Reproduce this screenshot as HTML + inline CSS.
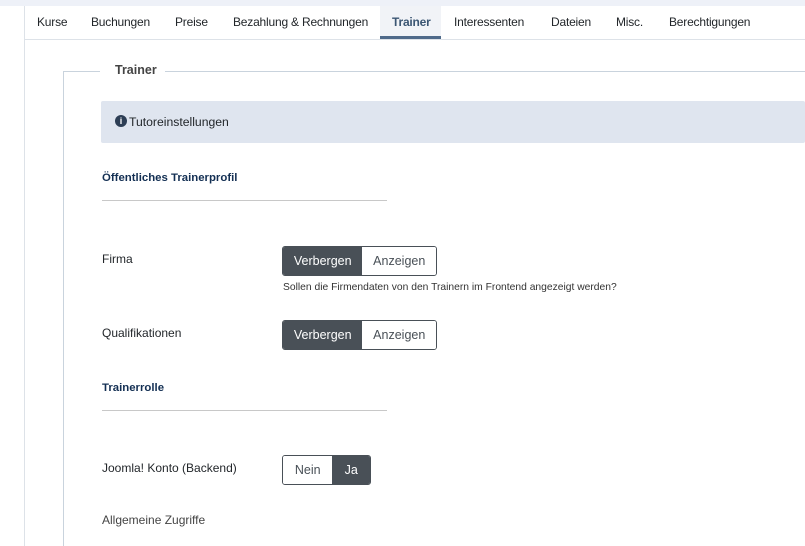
<!DOCTYPE html>
<html><head><meta charset="utf-8"><style>
body{margin:0;width:805px;height:546px;background:#fff;font-family:"Liberation Sans",sans-serif;position:relative;overflow:hidden;color:#22262a}
.a{position:absolute;white-space:nowrap}
.tab{position:absolute;top:6px;height:33px;line-height:33px;font-size:12px;letter-spacing:-0.2px;color:#22262a}
.btn{position:absolute;height:30px;border:1px solid #495057;border-radius:3px;display:flex;overflow:hidden;box-sizing:border-box;font-size:12.5px}
.btn span{display:block;line-height:28px;text-align:center}
.on{background:#495057;color:#fff}
.off{background:#fff;color:#495057}
.lbl{font-size:12px;color:#22262a}
.h{font-size:11.4px;font-weight:bold;color:#132f53}
</style></head><body>
<div class="a" style="left:0;top:0;width:805px;height:6px;background:#eef1f8"></div>
<div class="a" style="left:24px;top:6px;width:1px;height:540px;background:#dde2e8"></div>
<div class="a" style="left:25px;top:39px;width:780px;height:1px;background:#dde2e8"></div>
<div class="a" style="left:380px;top:6px;width:61px;height:33px;background:#f1f3f7;border-bottom:3px solid #4f6a8a;box-sizing:border-box"></div>
<div class="tab" style="left:37px">Kurse</div>
<div class="tab" style="left:91px">Buchungen</div>
<div class="tab" style="left:175px">Preise</div>
<div class="tab" style="left:233px">Bezahlung &amp; Rechnungen</div>
<div class="tab" style="left:392px;font-weight:bold;color:#3b5673">Trainer</div>
<div class="tab" style="left:454px">Interessenten</div>
<div class="tab" style="left:551px">Dateien</div>
<div class="tab" style="left:616px">Misc.</div>
<div class="tab" style="left:669px">Berechtigungen</div>
<div class="a" style="left:63px;top:71px;width:1px;height:475px;background:#c9d3dd"></div>
<div class="a" style="left:63px;top:71px;width:37px;height:1px;background:#c9d3dd"></div>
<div class="a" style="left:165px;top:71px;width:640px;height:1px;background:#c9d3dd"></div>
<div class="a" style="left:115px;top:63px;font-size:12.5px;font-weight:bold;color:#444">Trainer</div>
<div class="a" style="left:101px;top:101px;width:704px;height:42px;background:#dfe5ef;border-radius:2px"></div>
<div class="a" style="left:115px;top:115px;width:12px;height:12px;border-radius:50%;background:#2d3e55;color:#fff;font-size:9px;font-weight:bold;text-align:center;line-height:12px">i</div>
<div class="a" style="left:129px;top:115px;font-size:12.2px;color:#22262a">Tutoreinstellungen</div>
<div class="a h" style="left:102px;top:172px">Öffentliches Trainerprofil</div>
<div class="a" style="left:102px;top:200px;width:285px;height:1px;background:#c8c8c8"></div>
<div class="a lbl" style="left:102px;top:252px">Firma</div>
<div class="btn" style="left:282px;top:246px;width:155px"><span class="on" style="width:80px">Verbergen</span><span class="off" style="width:74px">Anzeigen</span></div>
<div class="a" style="left:283px;top:282px;font-size:10.3px;color:#333">Sollen die Firmendaten von den Trainern im Frontend angezeigt werden?</div>
<div class="a lbl" style="left:102px;top:326px">Qualifikationen</div>
<div class="btn" style="left:282px;top:320px;width:155px"><span class="on" style="width:80px">Verbergen</span><span class="off" style="width:74px">Anzeigen</span></div>
<div class="a h" style="left:102px;top:382px">Trainerrolle</div>
<div class="a" style="left:102px;top:410px;width:285px;height:1px;background:#c8c8c8"></div>
<div class="a lbl" style="left:102px;top:461px">Joomla! Konto (Backend)</div>
<div class="btn" style="left:282px;top:455px;width:89px"><span class="off" style="width:50px">Nein</span><span class="on" style="width:38px">Ja</span></div>
<div class="a lbl" style="left:102px;top:513px;color:#444">Allgemeine Zugriffe</div>
</body></html>
